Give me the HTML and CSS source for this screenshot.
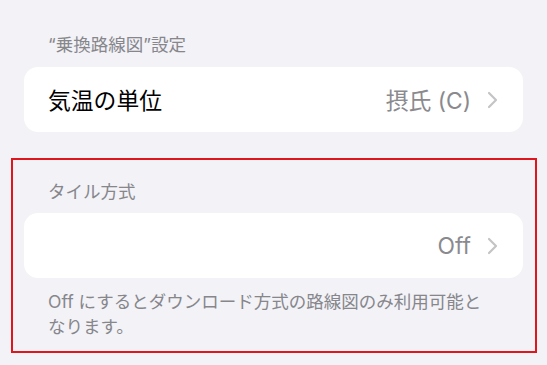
FILE: index.html
```html
<!DOCTYPE html>
<html lang="ja">
<head>
<meta charset="utf-8">
<link rel="stylesheet" href="styles.css">
</head>
<body>
<div class="page">
  <div class="section-header">“乗換路線図”設定</div>
  <div class="card">
    <span class="title">気温の単位</span>
    <span class="value">摂氏 (C)</span>
    <svg class="chevron" width="11" height="18" viewBox="0 0 11 18"><path d="M2 2 L9 9 L2 16" fill="none" stroke="#c4c4c7" stroke-width="2.2" stroke-linecap="round" stroke-linejoin="round"/></svg>
  </div>
  <div class="highlight">
    <div class="section-header">タイル方式</div>
    <div class="card">
      <span class="title"></span>
      <span class="value">Off</span>
      <svg class="chevron" width="11" height="18" viewBox="0 0 11 18"><path d="M2 2 L9 9 L2 16" fill="none" stroke="#c4c4c7" stroke-width="2.2" stroke-linecap="round" stroke-linejoin="round"/></svg>
    </div>
    <div class="footer">Off にするとダウンロード方式の路線図のみ利用可能となります。</div>
  </div>
</div>
</body>
</html>
```
FILE: styles.css
```css
html, body {
  margin: 0;
  padding: 0;
  background: #f2f2f7;
}
body {
  font-family: "Inter", "Noto Sans CJK JP", sans-serif;
  width: 547px;
  height: 365px;
  overflow: hidden;
}
.page {
  padding: 34px 24px 0 24px;
}
.section-header {
  font-size: 17.5px;
  line-height: 22px;
  color: #86868b;
  padding-left: 24px;
  margin-bottom: 11px;
}
.card {
  background: #ffffff;
  border-radius: 14px;
  height: 65px;
  display: flex;
  align-items: center;
  padding: 0 25px 0 24px;
}
.title {
  flex: 1;
  font-size: 22.8px;
  color: #000000;
}
.value {
  font-size: 22.8px;
  color: #8a8a8e;
  margin-right: 16px;
}
.chevron {
  display: block;
}
.highlight {
  margin: 26px -14px 0 -13px;
  border: 2px solid #e0161e;
  padding: 21px 12px 12px 11px;
}
.highlight .section-header {
  margin-bottom: 10px;
}
.footer {
  margin-top: 11px;
  padding: 0 30px 0 24px;
  font-size: 17.5px;
  line-height: 25px;
  color: #86868b;
}
```
